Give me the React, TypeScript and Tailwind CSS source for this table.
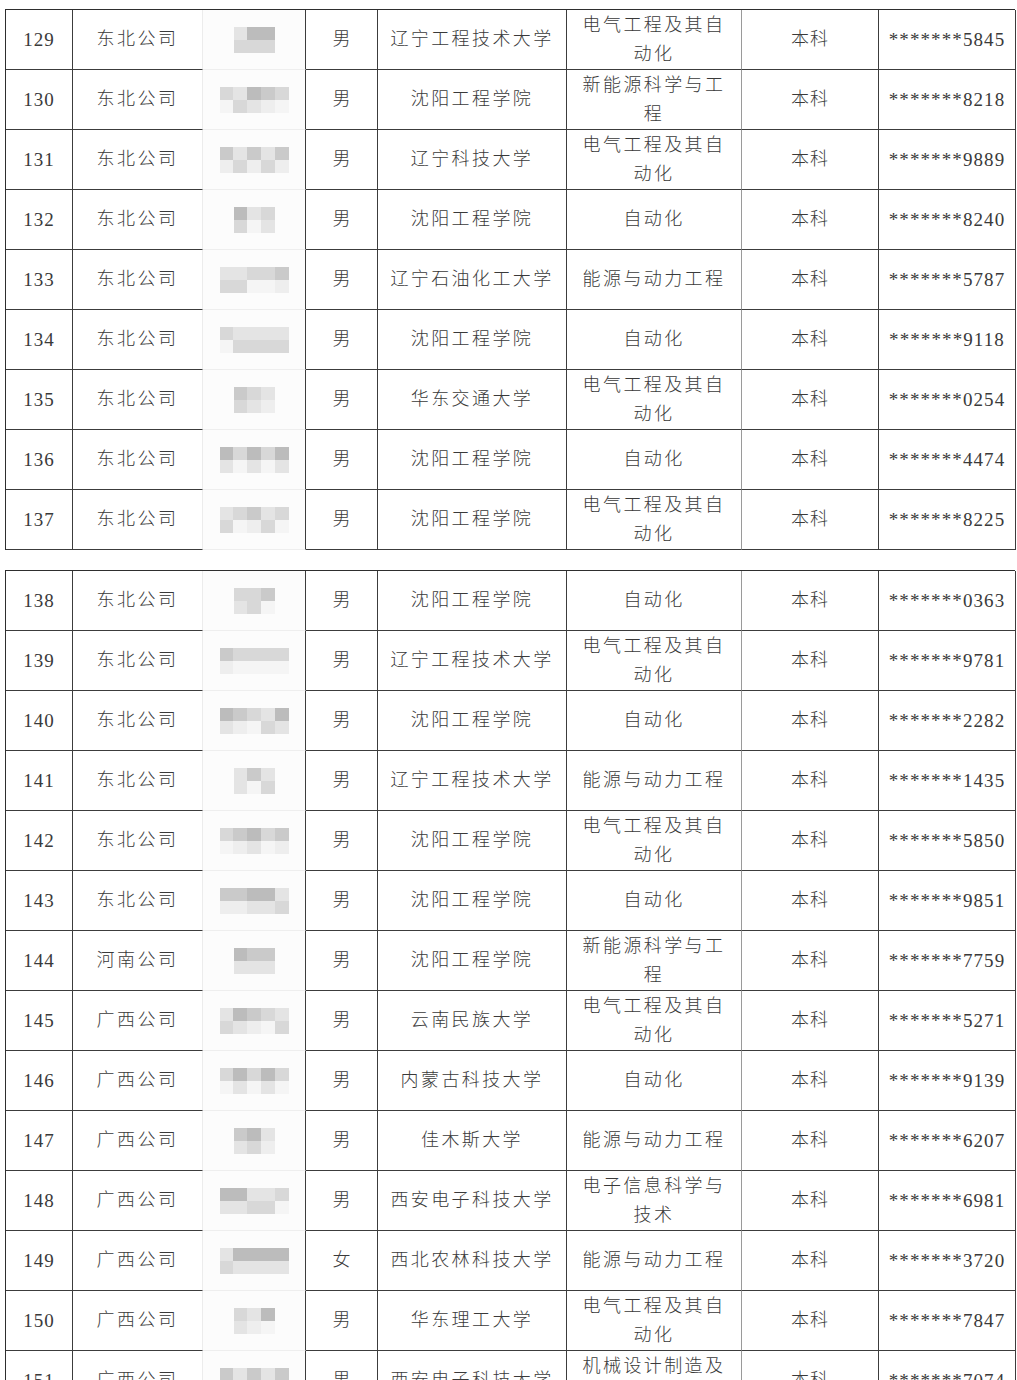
type Row = {
  no: number;
  company: string;
  gender: string;
  school: string;
  major: string[];
  degree: string;
  id: string;
};

const r = (
  no: number,
  company: string,
  gender: string,
  school: string,
  major: string,
  id: string
): Row => ({ no, company, gender, school, major: major.split('|'), degree: '本科', id: '*******' + id });

const firstPage: Row[] = [
  r(129, '东北公司', '男', '辽宁工程技术大学', '电气工程及其自|动化', '5845'),
  r(130, '东北公司', '男', '沈阳工程学院', '新能源科学与工|程', '8218'),
  r(131, '东北公司', '男', '辽宁科技大学', '电气工程及其自|动化', '9889'),
  r(132, '东北公司', '男', '沈阳工程学院', '自动化', '8240'),
  r(133, '东北公司', '男', '辽宁石油化工大学', '能源与动力工程', '5787'),
  r(134, '东北公司', '男', '沈阳工程学院', '自动化', '9118'),
  r(135, '东北公司', '男', '华东交通大学', '电气工程及其自|动化', '0254'),
  r(136, '东北公司', '男', '沈阳工程学院', '自动化', '4474'),
  r(137, '东北公司', '男', '沈阳工程学院', '电气工程及其自|动化', '8225'),
];

const secondPage: Row[] = [
  r(138, '东北公司', '男', '沈阳工程学院', '自动化', '0363'),
  r(139, '东北公司', '男', '辽宁工程技术大学', '电气工程及其自|动化', '9781'),
  r(140, '东北公司', '男', '沈阳工程学院', '自动化', '2282'),
  r(141, '东北公司', '男', '辽宁工程技术大学', '能源与动力工程', '1435'),
  r(142, '东北公司', '男', '沈阳工程学院', '电气工程及其自|动化', '5850'),
  r(143, '东北公司', '男', '沈阳工程学院', '自动化', '9851'),
  r(144, '河南公司', '男', '沈阳工程学院', '新能源科学与工|程', '7759'),
  r(145, '广西公司', '男', '云南民族大学', '电气工程及其自|动化', '5271'),
  r(146, '广西公司', '男', '内蒙古科技大学', '自动化', '9139'),
  r(147, '广西公司', '男', '佳木斯大学', '能源与动力工程', '6207'),
  r(148, '广西公司', '男', '西安电子科技大学', '电子信息科学与|技术', '6981'),
  r(149, '广西公司', '女', '西北农林科技大学', '能源与动力工程', '3720'),
  r(150, '广西公司', '男', '华东理工大学', '电气工程及其自|动化', '7847'),
  r(151, '广西公司', '男', '西安电子科技大学', '机械设计制造及|其自动化', '7074'),
];

// greys for the pixelated name blocks
const shades = ['bg-[#bcbcbc]', 'bg-[#cacaca]', 'bg-[#d8d8d8]', 'bg-[#e4e4e4]', 'bg-[#eeeeee]', 'bg-[#f5f5f5]'];

function Mosaic({ seed }: { seed: number }) {
  const cols = seed % 3 === 0 ? 3 : 5;
  const cells: string[] = [];
  for (let i = 0; i < cols * 2; i++) {
    const h = (seed * 31 + i * 17 + ((seed * i) % 5)) % 4;
    cells.push(shades[i < cols ? h : h + 2]);
  }
  return (
    <div className={cols === 3 ? 'grid grid-cols-[13px_14px_14px]' : 'grid grid-cols-[13px_14px_14px_14px_14px]'}>
      {cells.map((c, i) => (
        <div key={i} className={`h-[13px] ${c}`} />
      ))}
    </div>
  );
}

const cell = 'flex items-center justify-center border-r border-b border-[#3c3c3c] text-center';

function Sheet({ rows }: { rows: Row[] }) {
  return (
    <div className="grid w-[1010px] grid-cols-[67px_130px_103px_72px_189px_175px_137px_137px] border-t border-l border-[#2e2e2e] text-[#3a3a3a]">
      {rows.map((row) => (
        <div key={row.no} className="contents">
          <div className={`${cell} h-[60px] pt-[1px] text-[19px] tracking-[1px]`}>{row.no}</div>
          <div className={`${cell} border-r-[#ececec] text-[18px] tracking-[2.5px]`}>{row.company}</div>
          <div className={`${cell} border-b-[#eeeeee] bg-[#fcfcfc]`}>
            <Mosaic seed={row.no} />
          </div>
          <div className={`${cell} text-[18px]`}>{row.gender}</div>
          <div className={`${cell} text-[18px] tracking-[2.4px]`}>{row.school}</div>
          <div className={`${cell} flex-col border-r-[#9a9a9a] text-[18px] leading-[29px] tracking-[2.4px]`}>
            {row.major.map((line) => (
              <span key={line}>{line}</span>
            ))}
          </div>
          <div className={`${cell} text-[18px] tracking-[1px]`}>{row.degree}</div>
          <div className={`${cell} pt-[1px] text-[19px] tracking-[1.1px]`}>{row.id}</div>
        </div>
      ))}
    </div>
  );
}

export default function App() {
  return (
    <div className="h-[1380px] overflow-hidden bg-white pt-[9px] pl-[5px] font-['Liberation_Serif','Noto_Sans_CJK_SC',serif] font-light">
      <Sheet rows={firstPage} />
      <div className="mt-[20px]">
        <Sheet rows={secondPage} />
      </div>
    </div>
  );
}
